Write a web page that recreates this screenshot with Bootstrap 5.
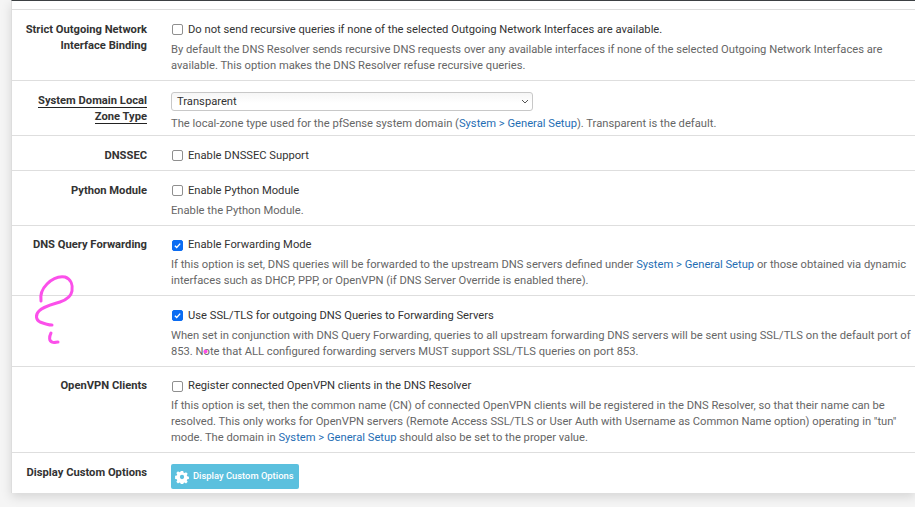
<!DOCTYPE html>
<html><head><meta charset="utf-8"><title>DNS Resolver</title>
<link href="https://cdn.jsdelivr.net/npm/bootstrap@5.3.0/dist/css/bootstrap.min.css" rel="stylesheet">
<style>
html,body{height:507px;overflow:hidden}
body{background:#f5f5f5;font-family:Roboto,"Liberation Sans",sans-serif;font-size:11.2px;line-height:16px;color:#333;position:relative}
.sheet{margin-left:11px;background:#fff;border-left:1px solid #ddd;border-top:1px solid #3c4043;box-shadow:0 4px 10px rgba(0,0,0,.13);width:904px}
.topgap{height:8px}
.setrow{border-top:1px solid #dedede;padding:11.5px 0 6.5px;}
.setrow.tight{padding:11px 0 6px}
.setrow.zonerow{padding-bottom:3px}
.setrow.btnrow{padding-bottom:4px}
.setlabel{width:135px;flex:none;text-align:right;font-weight:700;margin-right:24px;color:#333}
.setlabel span{border-bottom:1px solid #222;}
.field{width:745px;flex:none;color:#666}
.checkline{display:flex;align-items:center;gap:5px;color:#333;padding-left:1px}
.checkline input{margin:0;width:11px;height:11px;flex:none;appearance:none;border:1px solid #8f8f8f;border-radius:2px;background:#fff}
.checkline input:checked{background:#0b6cf2 url("data:image/svg+xml,%3Csvg xmlns='http://www.w3.org/2000/svg' viewBox='0 0 12 12'%3E%3Cpath d='M2.5 6.2 5 8.7 9.6 3.5' fill='none' stroke='%23fff' stroke-width='1.8'/%3E%3C/svg%3E") center/100% no-repeat;border-color:#0b6cf2}
.helper{margin-top:4px;color:#666}
.helper.afterzone{margin-top:5px}
.helper a{color:#1f6eb4;text-decoration:none}
.zone{width:362px;height:19px;margin-top:-.5px;padding:0 3px 0 5px;color:#333;border:1px solid #c8c8c8;border-radius:3px;background:linear-gradient(#f6f6f6,#fff 60%);display:flex;justify-content:space-between;align-items:center}
.custombtn{background:#5bc0de;color:#fff;font-size:9.4px;border:0;border-radius:2px;height:25px;width:128px;padding:0 0 0 4px;display:flex;align-items:center;justify-content:flex-start;gap:4px;margin-top:-.5px;font-weight:500}
.custombtn:hover{background:#5bc0de;color:#fff}
.scribble{position:absolute;left:30px;top:270px;pointer-events:none}
</style></head><body>
<div class="sheet">
<div class="topgap"></div>
<div class="setrow d-flex"><div class="setlabel">Strict Outgoing Network Interface Binding</div><div class="field"><label class="checkline"><input type="checkbox">Do not send recursive queries if none of the selected Outgoing Network Interfaces are available.</label><div class="helper">By default the DNS Resolver sends recursive DNS requests over any available interfaces if none of the selected Outgoing Network Interfaces are available. This option makes the DNS Resolver refuse recursive queries.</div></div></div>
<div class="setrow zonerow d-flex"><div class="setlabel"><span>System Domain Local</span><br><span>Zone Type</span></div><div class="field"><div class="zone">Transparent<svg width="8" height="5" viewBox="0 0 8 5"><path d="M1 1l3 3 3-3" fill="none" stroke="#555" stroke-width="1"/></svg></div><div class="helper afterzone">The local-zone type used for the pfSense system domain (<a href="#">System &gt; General Setup</a>). Transparent is the default.</div></div></div>
<div class="setrow d-flex"><div class="setlabel">DNSSEC</div><div class="field"><label class="checkline"><input type="checkbox">Enable DNSSEC Support</label></div></div>
<div class="setrow d-flex"><div class="setlabel">Python Module</div><div class="field"><label class="checkline"><input type="checkbox">Enable Python Module</label><div class="helper">Enable the Python Module.</div></div></div>
<div class="setrow tight d-flex"><div class="setlabel">DNS Query Forwarding</div><div class="field"><label class="checkline"><input type="checkbox" checked>Enable Forwarding Mode</label><div class="helper">If this option is set, DNS queries will be forwarded to the upstream DNS servers defined under <a href="#">System &gt; General Setup</a> or those obtained via dynamic interfaces such as DHCP, PPP, or OpenVPN (if DNS Server Override is enabled there).</div></div></div>
<div class="setrow d-flex"><div class="setlabel"></div><div class="field"><label class="checkline"><input type="checkbox" checked>Use SSL/TLS for outgoing DNS Queries to Forwarding Servers</label><div class="helper">When set in conjunction with DNS Query Forwarding, queries to all upstream forwarding DNS servers will be sent using SSL/TLS on the default port of 853. Note that ALL configured forwarding servers MUST support SSL/TLS queries on port 853.</div></div></div>
<div class="setrow tight d-flex"><div class="setlabel">OpenVPN Clients</div><div class="field"><label class="checkline"><input type="checkbox">Register connected OpenVPN clients in the DNS Resolver</label><div class="helper">If this option is set, then the common name (CN) of connected OpenVPN clients will be registered in the DNS Resolver, so that their name can be resolved. This only works for OpenVPN servers (Remote Access SSL/TLS or User Auth with Username as Common Name option) operating in "tun" mode. The domain in <a href="#">System &gt; General Setup</a> should also be set to the proper value.</div></div></div>
<div class="setrow btnrow d-flex"><div class="setlabel">Display Custom Options</div><div class="field"><button class="custombtn btn"><svg width="14" height="14" viewBox="-0.5 -0.5 15 15"><path fill="#fff" fill-rule="evenodd" d="M5.7 0.5h2.6l.3 1.8 1.2.5 1.5-1 1.8 1.8-1 1.5.5 1.2 1.8.3v2.6l-1.8.3-.5 1.2 1 1.5-1.8 1.8-1.5-1-1.2.5-.3 1.8H5.7l-.3-1.8-1.2-.5-1.5 1-1.8-1.8 1-1.5-.5-1.2-1.8-.3V5.7l1.8-.3.5-1.2-1-1.5 1.8-1.8 1.5 1 1.2-.5zM7 4.7a2.3 2.3 0 1 0 0 4.6 2.3 2.3 0 0 0 0-4.6z"/></svg>Display Custom Options</button></div></div>
</div>
<svg class="scribble" width="50" height="80" viewBox="0 0 50 80"><path d="M11 31C10 25 12 19 17 14 22 9 29 6 35 7 41 9 43 15 42 21 41 27 36 30 30 32 24 34 14 36 9 41 5 45 6 50 10 52 15 54 19 55 22 55M21 63C19 67 19 71 22 72 24 73 26 72 28 72" fill="none" stroke="#fb50ea" stroke-width="3" stroke-linecap="round"/></svg>
<svg class="scribble" style="left:203px;top:349px" width="5" height="5"><circle cx="2.5" cy="2.5" r="2" fill="#fb50ea"/></svg>
</body></html>
